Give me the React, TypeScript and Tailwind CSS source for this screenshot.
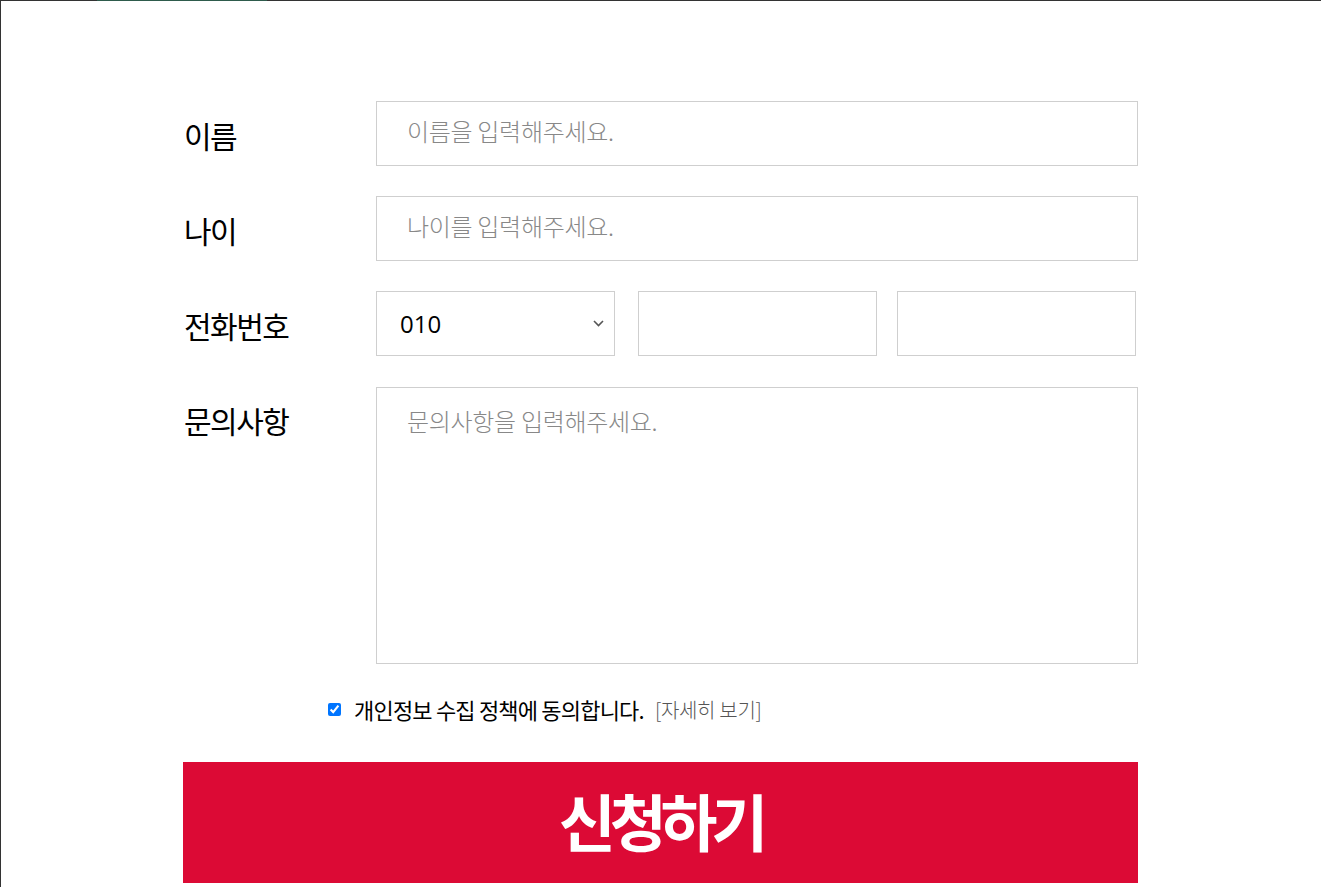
import React from 'react'

const KR = "font-['Noto_Sans_CJK_KR','Noto_Sans',sans-serif]"

function Row({ label, children, top = false }: { label: string; children: React.ReactNode; top?: boolean }) {
    return (
        <div className={`flex ${top ? 'items-start' : 'items-center'}`}>
            <div className={`w-[193px] shrink-0 pl-[1px] text-[30px] leading-none tracking-[-1.5px] text-black ${top ? 'pt-[19px]' : 'pt-[3px]'}`}>
                {label}
            </div>
            <div className="flex-1">{children}</div>
        </div>
    )
}

export default function App() {
    const inputCls =
        'w-full h-[65px] border border-[#cfcfcf] bg-white pl-[30px] pb-[6px] text-[24px] font-light tracking-[-0.3px] text-black placeholder:text-[#888] outline-none'

    return (
        <div className={`min-h-[887px] bg-white border-t border-l border-[#333] ${KR} relative`}>
            <div className="absolute top-[-1px] left-[96px] w-[170px] h-[1px] bg-[#2e5b4c]" />
            <form className="w-[955px] ml-[182px] pt-[100px] flex flex-col">
                <div className="flex flex-col gap-[30px]">
                    <Row label="이름">
                        <input className={inputCls} placeholder="이름을 입력해주세요." />
                    </Row>
                    <Row label="나이">
                        <input className={inputCls} placeholder="나이를 입력해주세요." />
                    </Row>
                    <Row label="전화번호">
                        <div className="flex">
                            <div className="relative w-[239px]">
                                <select className="appearance-none w-full h-[65px] border border-[#cfcfcf] bg-white pl-[23px] text-[24px] text-black outline-none font-['Open_Sans',sans-serif]">
                                    <option>010</option>
                                    <option>011</option>
                                    <option>016</option>
                                    <option>017</option>
                                    <option>019</option>
                                </select>
                                <svg className="absolute right-[11px] top-[29px] pointer-events-none" width="11" height="7" viewBox="0 0 11 7" fill="none">
                                    <path d="M1 1l4.5 4.5L10 1" stroke="#555" strokeWidth="1.6" />
                                </svg>
                            </div>
                            <input className="ml-[23px] w-[239px] h-[65px] border border-[#cfcfcf] bg-white outline-none" />
                            <input className="ml-[20px] w-[239px] h-[65px] border border-[#cfcfcf] bg-white outline-none" />
                        </div>
                    </Row>
                    <Row label="문의사항" top>
                        <textarea
                            className="block mt-[1px] w-full h-[277px] resize-none border border-[#cfcfcf] bg-white pl-[30px] pt-[17px] text-[24px] font-light tracking-[-0.3px] leading-[32px] text-black placeholder:text-[#888] outline-none"
                            placeholder="문의사항을 입력해주세요."
                        />
                    </Row>
                </div>

                <div className="mt-[29px] ml-[145px] flex items-center">
                    <input type="checkbox" defaultChecked className="w-[13px] h-[13px] m-0" />
                    <span className="ml-[13px] text-[22px] tracking-[-0.8px] text-black">개인정보 수집 정책에 동의합니다.</span>
                    <span className="ml-[11px] text-[20px] font-light tracking-[-0.3px] text-[#555]">[자세히 보기]</span>
                </div>

                <button
                    type="button"
                    className="mt-[36px] h-[121px] w-full bg-[#dc0a35] pb-[6px] text-white text-[62px] font-bold tracking-[-0.1em] leading-none"
                >
                    신청하기
                </button>
            </form>
        </div>
    )
}
